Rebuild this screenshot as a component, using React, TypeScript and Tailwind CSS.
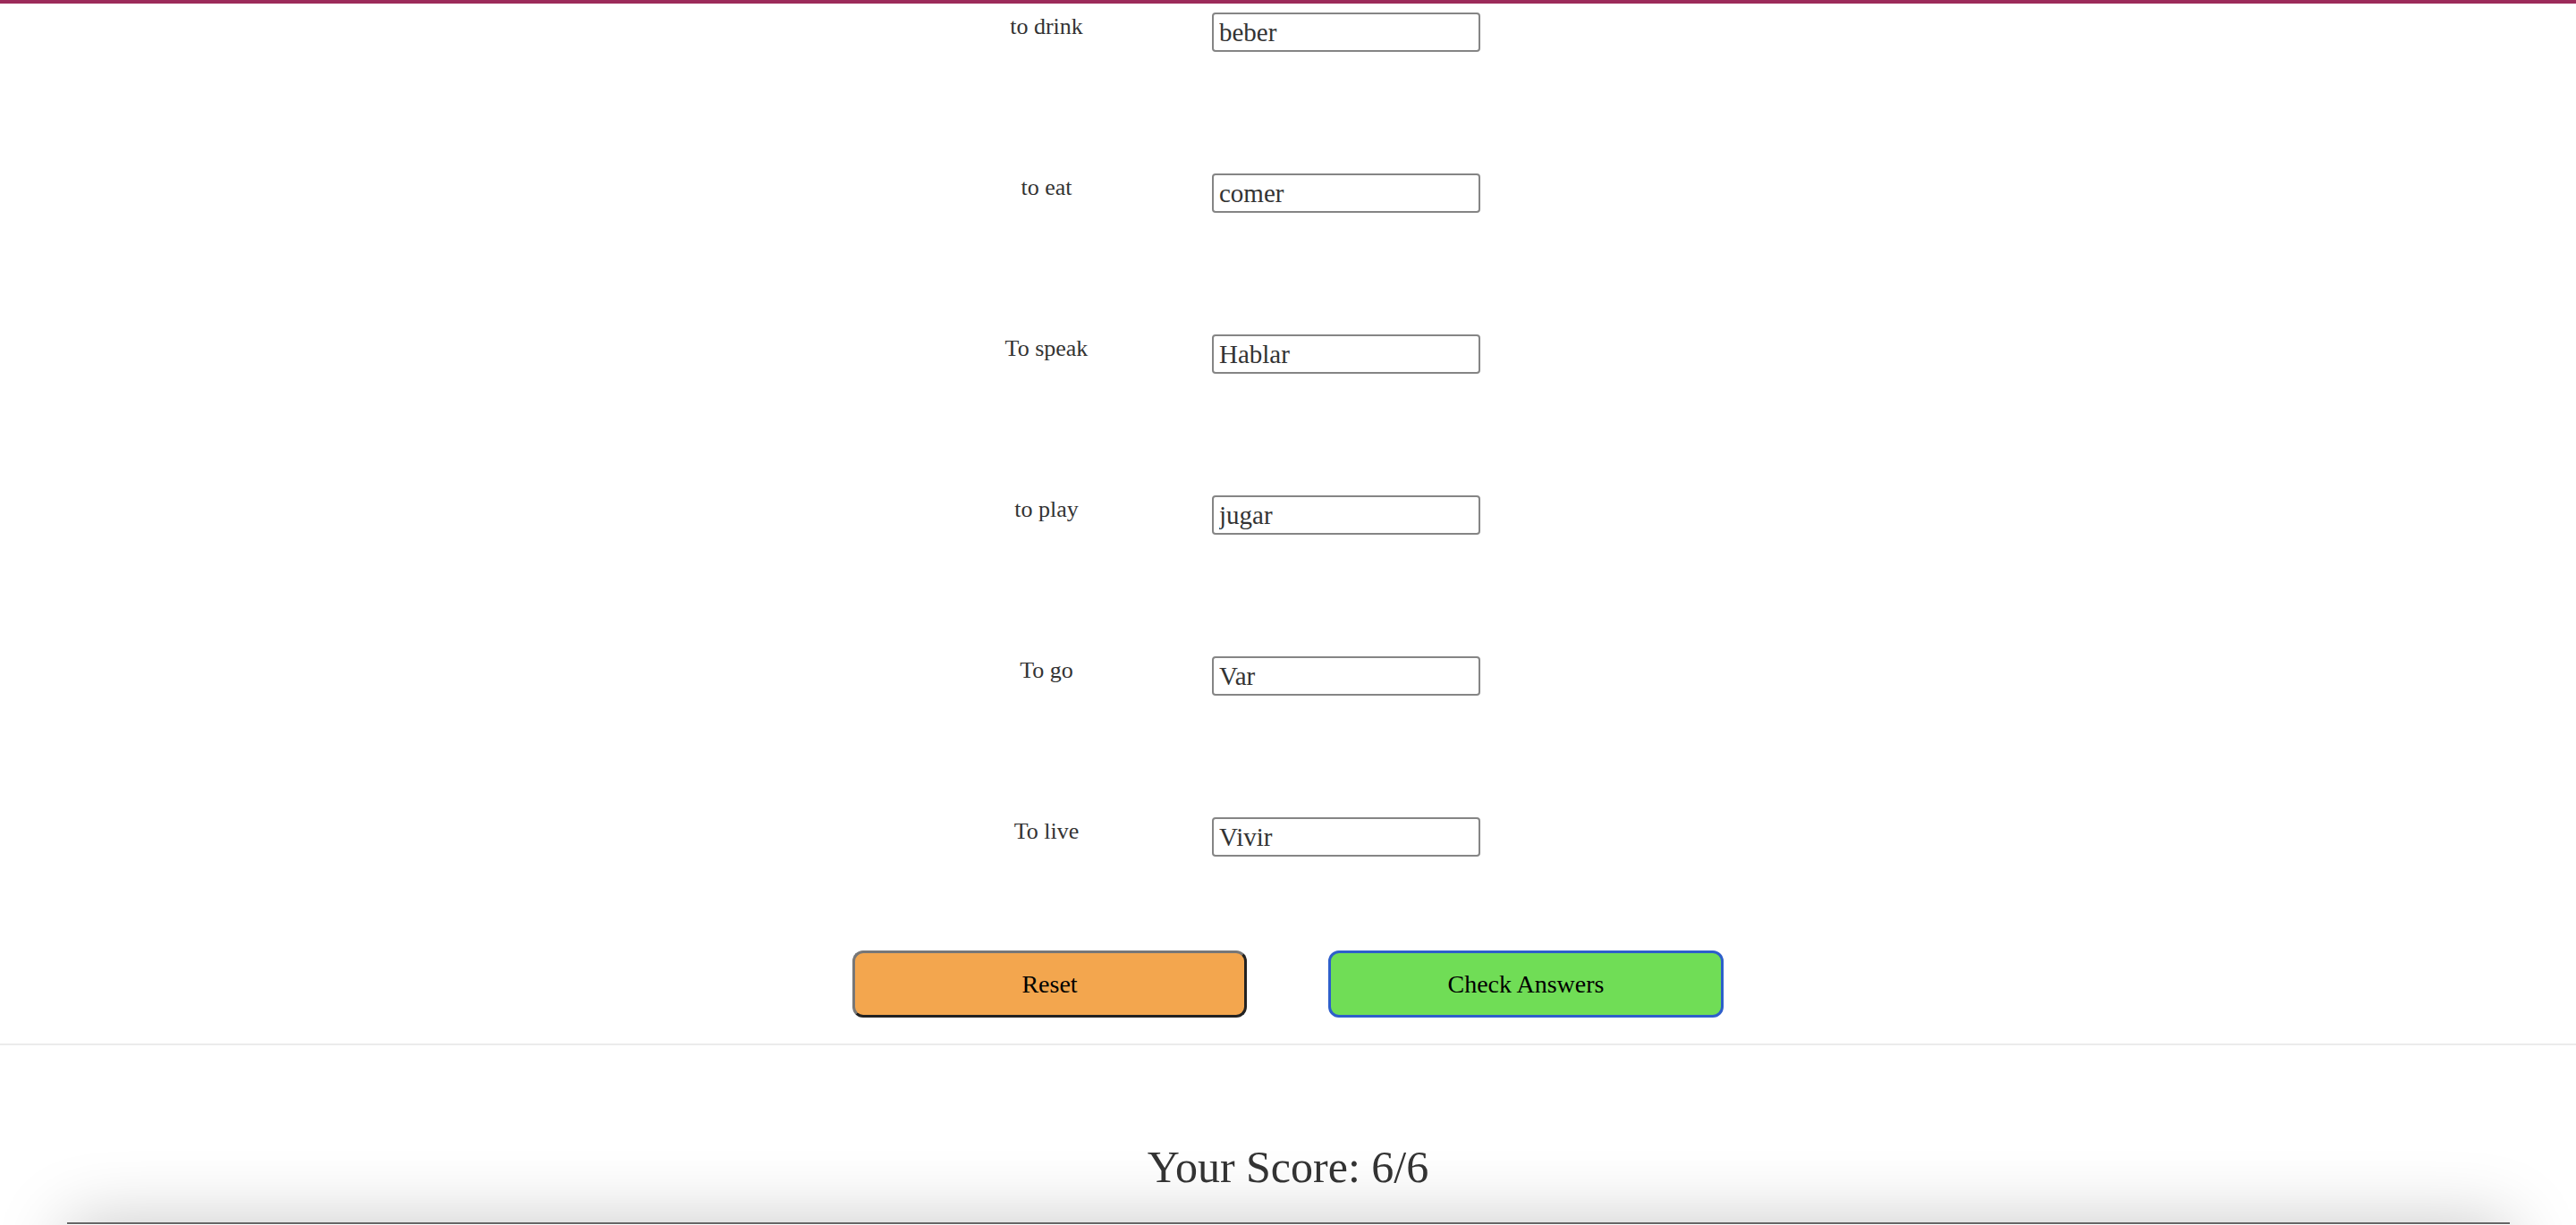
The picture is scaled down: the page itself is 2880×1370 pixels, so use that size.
import React, { useState } from 'react';

interface Word {
  id: number;
  english: string;
  answer: string;
}

const words: Word[] = [
  { id: 1, english: 'to drink', answer: 'beber' },
  { id: 2, english: 'to eat', answer: 'comer' },
  { id: 3, english: 'To speak', answer: 'Hablar' },
  { id: 4, english: 'to play', answer: 'jugar' },
  { id: 5, english: 'To go', answer: 'Var' },
  { id: 6, english: 'To live', answer: 'Vivir' },
];

const serif = "font-['Liberation_Serif','Times_New_Roman',serif]";

const App: React.FC = () => {
  const [answers, setAnswers] = useState<string[]>(words.map((w) => w.answer));

  return (
    <div className={`min-h-screen bg-white border-t-4 border-[#9c2b5a] text-[#333] ${serif}`}>
      {/* Quiz rows */}
      <div className="mx-auto w-[770px] pt-[10px] flex flex-col gap-[136px]">
        {words.map((w, i) => (
          <div key={w.id} className="flex items-start">
            <label className="w-[230px] text-center text-[26px] leading-[30px] pt-px">{w.english}</label>
            <input
              type="text"
              value={answers[i]}
              onChange={(e) => {
                const next = [...answers];
                next[i] = e.target.value;
                setAnswers(next);
              }}
              className={`ml-[70px] w-[300px] h-[44px] px-[6px] text-[29px] text-[#333] border-2 border-[#858585] rounded-[4px] bg-white outline-none ${serif}`}
            />
          </div>
        ))}
      </div>

      {/* Buttons */}
      <div className="mt-[105px] flex justify-center gap-[91px]">
        <button
          className={`w-[441px] h-[75px] rounded-[12px] bg-[#f3a64e] border-[3px] border-t-[#777] border-l-[#777] border-r-[#222] border-b-[#222] text-black text-[28px] ${serif}`}
        >
          Reset
        </button>
        <button
          className={`w-[442px] h-[75px] rounded-[12px] bg-[#70dd56] border-[3px] border-[#2e5fcb] text-black text-[28px] ${serif}`}
        >
          Check Answers
        </button>
      </div>

      <div className="mt-[29px] h-[2px] bg-[#ebebeb]" />

      {/* Score */}
      <div className="pt-[108px] text-center text-[50px] leading-[56px] text-[#333]">Your Score: 6/6</div>

      {/* Footer card */}
      <div className="mt-[34px] mx-auto w-[2731px] h-[200px] border-t-2 border-[#666] bg-white shadow-[0_0_80px_rgba(0,0,0,0.22)]" />
    </div>
  );
};

export default App;
